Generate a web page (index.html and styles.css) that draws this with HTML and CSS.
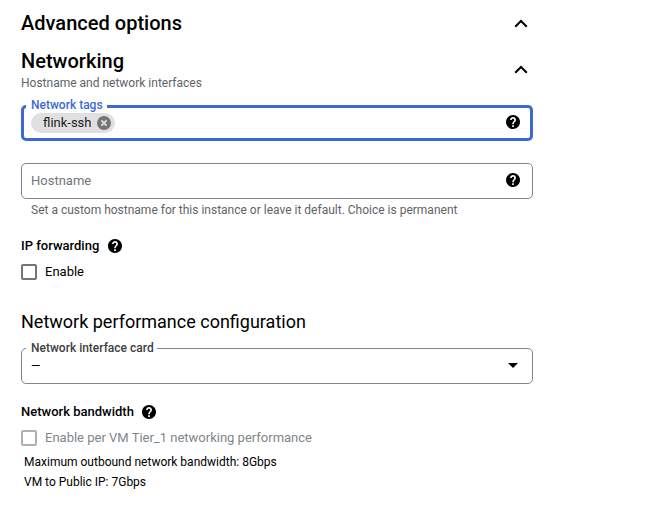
FILE: index.html
```html
<!DOCTYPE html>
<html lang="en">
<head>
<meta charset="utf-8">
<title>Advanced options</title>
<link rel="stylesheet" href="styles.css">
</head>
<body>
<svg class="defs" width="0" height="0" aria-hidden="true">
  <symbol id="help" viewBox="2 2 20 20"><path d="M12 2C6.48 2 2 6.48 2 12s4.48 10 10 10 10-4.48 10-10S17.52 2 12 2zm1.2 17h-2.4v-2.4h2.4V19zm2-7.5-.9.92c-.72.73-1.1 1.33-1.1 2.78h-2.4v-.5c0-1.1.45-2.1 1.17-2.83l1.24-1.26c.37-.36.59-.86.59-1.41 0-1-.8-1.8-1.8-1.8s-1.8.8-1.8 1.8H7.8C7.8 6.8 9.7 4.9 12 4.9s4.2 1.9 4.2 4.2c0 .9-.4 1.7-1 2.4z"/></symbol>
  <symbol id="chevron" viewBox="0 0 14 9"><path d="M1.2 7.8 7 2l5.8 5.8" fill="none" stroke="currentColor" stroke-width="2"/></symbol>
</svg>
<main class="panel">
  <header class="section section-main">
    <h1 class="title">Advanced options</h1>
    <svg class="chevron"><use href="#chevron"/></svg>
  </header>
  <header class="section section-sub">
    <div>
      <h2 class="title">Networking</h2>
      <p class="subtitle">Hostname and network interfaces</p>
    </div>
    <svg class="chevron"><use href="#chevron"/></svg>
  </header>
  <div class="field focused">
    <span class="label">Network tags</span>
    <span class="chip"><span class="chip-text">flink-ssh</span>
      <svg class="remove" viewBox="0 0 14 14"><circle cx="7" cy="7" r="7"/><path d="m4.4 4.4 5.2 5.2m0-5.2L4.4 9.6"/></svg>
    </span>
    <svg class="help"><use href="#help"/></svg>
  </div>
  <div class="field hostname">
    <span class="placeholder">Hostname</span>
    <svg class="help"><use href="#help"/></svg>
  </div>
  <p class="hint">Set a custom hostname for this instance or leave it default. Choice is permanent</p>
  <h3 class="group forwarding"><span class="text">IP forwarding</span><svg class="help"><use href="#help"/></svg></h3>
  <label class="check"><span class="box"></span><span class="text">Enable</span></label>
  <h2 class="heading">Network performance configuration</h2>
  <div class="field select">
    <span class="label">Network interface card</span>
    <span class="value">—</span>
    <svg class="arrow" viewBox="0 0 10 5"><path d="M0 0h10L5 5z"/></svg>
  </div>
  <h3 class="group bandwidth"><span class="text">Network bandwidth</span><svg class="help"><use href="#help"/></svg></h3>
  <label class="check disabled"><span class="box"></span><span class="text">Enable per VM Tier_1 networking performance</span></label>
  <div class="limits">
    <p>Maximum outbound network bandwidth: 8Gbps</p>
    <p>VM to Public IP: 7Gbps</p>
  </div>
</main>
</body>
</html>
```
FILE: styles.css
```css
* { box-sizing: border-box; }
body { margin: 0; background: #fff; color: #000; font-family: Roboto, "Liberation Sans", sans-serif; font-size: 13px; }
h1, h2, h3, p { margin: 0; }
.defs { display: block; height: 0; }
.panel { width: 512px; margin-left: 21px; padding-top: 3px; }
.section { display: flex; align-items: center; justify-content: space-between; padding-right: 5px; }
.section-main { height: 40px; }
.section-sub { height: 52px; }
.title { font-size: 20px; font-weight: 500; line-height: 28px; letter-spacing: .02px; }
.subtitle { font-size: 12px; line-height: 16px; color: #5f6368; }
.chevron { width: 14px; height: 9px; }
.help { flex: none; width: 14px; height: 14px; }
.text, .chip-text { padding-bottom: 2px; }
.field { position: relative; display: flex; align-items: center; justify-content: space-between; height: 36px; padding: 0 12px 2px 9px; border: 1px solid #80868b; border-radius: 5px; }
.focused { margin-top: 10px; padding: 0 10px 2px 7px; border: 3px solid #3c69d6; }
.label { position: absolute; left: 4px; top: -9px; padding: 0 3px 0 5px; background: #fff; font-size: 12px; font-weight: 500; line-height: 16px; color: #3c4043; }
.focused .label { left: 2px; top: -11px; padding-right: 4px; color: #3c69d6; }
.chip { display: flex; align-items: center; gap: 6px; height: 20px; margin-top: 2px; padding: 0 4px 0 12px; border-radius: 10px; background: #e0e0e0; color: #212121; }
.remove { width: 14px; height: 14px; fill: #757575; }
.remove path { stroke: #e0e0e0; stroke-width: 1.8; }
.hostname { margin-top: 22px; }
.placeholder { color: #70757a; }
.hint { margin: 3px 0 0 10px; font-size: 12px; line-height: 16px; color: #5f6368; }
.group { display: flex; align-items: center; gap: 9px; height: 20px; font-size: 13px; font-weight: 500; }
.forwarding { margin-top: 18px; }
.check { display: flex; align-items: center; gap: 8px; height: 16px; margin-top: 8px; }
.box { width: 16px; height: 16px; border: 2px solid #757575; border-radius: 2px; }
.disabled { color: #80868b; }
.disabled .box { border-color: #b0b0b0; }
.heading { margin-top: 28px; font-size: 18px; font-weight: 400; line-height: 28px; }
.select { margin-top: 12px; padding-right: 14px; }
.value { margin-top: 2px; font-size: 12px; }
.arrow { width: 10px; height: 5px; margin-top: 1px; }
.bandwidth { gap: 8px; margin-top: 18px; }
.limits { margin: 6px 0 0 3px; font-size: 12px; line-height: 20px; }
```
